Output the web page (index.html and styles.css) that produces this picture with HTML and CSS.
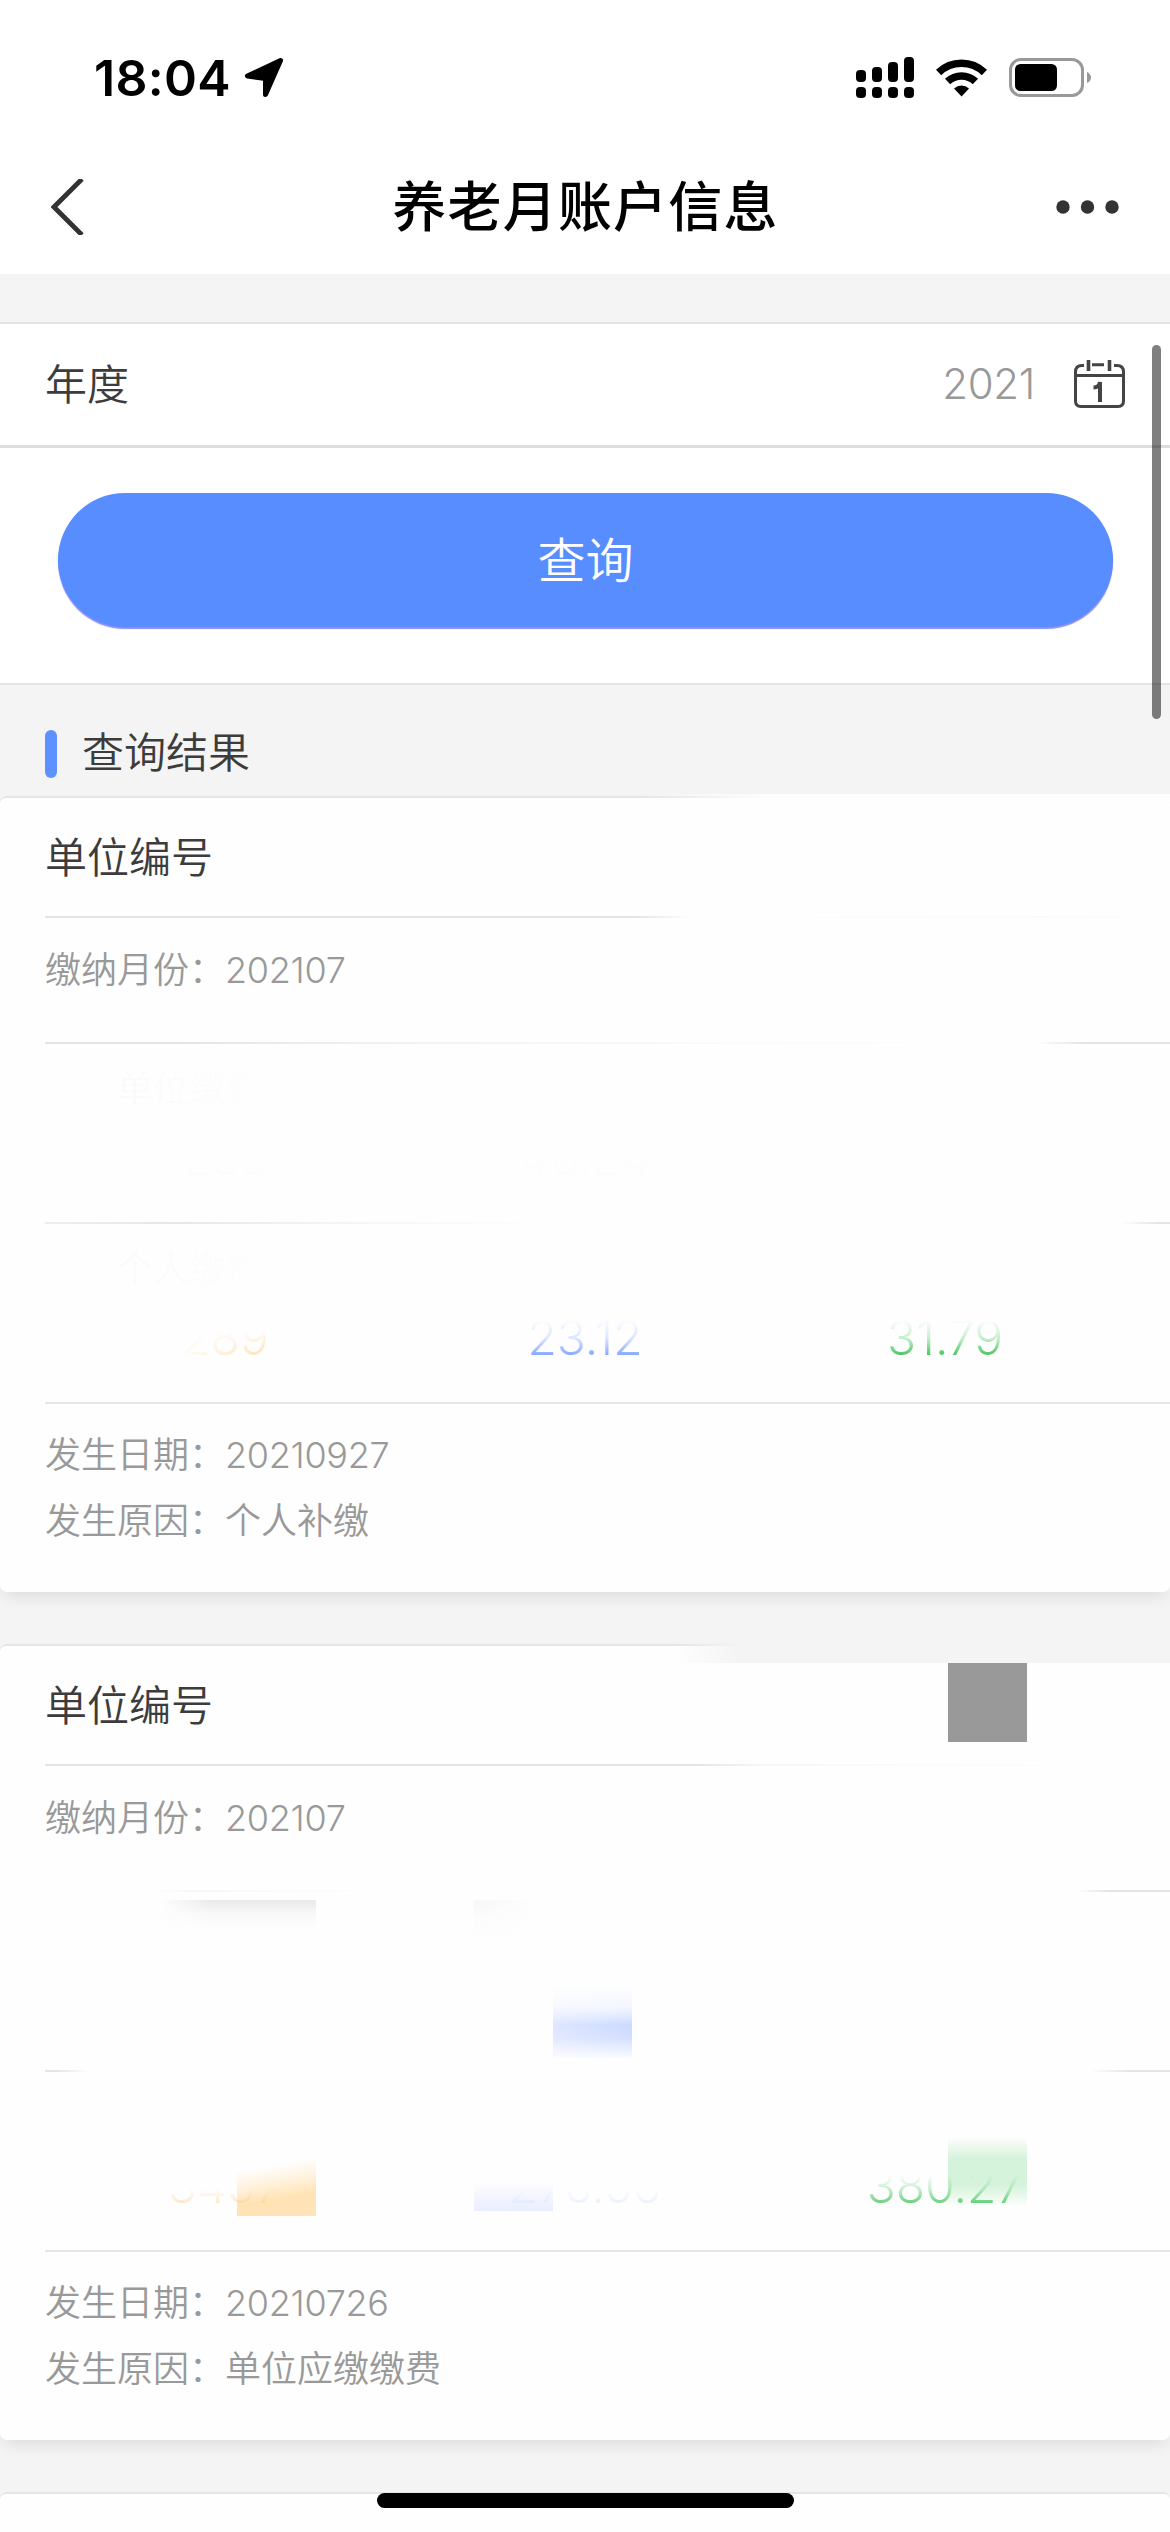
FILE: index.html
```html
<!DOCTYPE html>
<html lang="zh-CN">
<head>
<meta charset="utf-8">
<title>养老月账户信息</title>
<link rel="stylesheet" href="styles.css">
</head>
<body>
<div class="screen">
  <header class="top">
    <div class="status">
      <div class="status-left">
        <span class="time">18:04</span>
        <svg class="loc" width="40" height="40" viewBox="0 0 40 40"><path d="M36 3 L3 18.500 L21 21 L21 37 Z" fill="#000" stroke="#000" stroke-width="5" stroke-linejoin="round" transform="translate(.5 -.5)"/></svg>
      </div>
      <div class="status-right">
        <svg width="58" height="42" viewBox="0 0 58 42"><g fill="#000"><rect x="0" y="13" width="10" height="12" rx="4"/><rect x="16" y="10" width="10" height="15" rx="4"/><rect x="32" y="5" width="10" height="20" rx="4"/><rect x="48" y="0" width="10" height="25" rx="4"/><rect x="0" y="30" width="10" height="11" rx="4"/><rect x="16" y="30" width="10" height="11" rx="4"/><rect x="32" y="30" width="10" height="11" rx="4"/><rect x="48" y="30" width="10" height="11" rx="4"/></g></svg>
        <svg class="wifi" width="51" height="38" viewBox="0 0 51 38"><g fill="none" stroke="#000" stroke-width="7.500"><path d="M2.600 13.500 A33 33 0 0 1 48.400 13.500"/><path d="M11.600 22.500 A20 20 0 0 1 39.400 22.500"/></g><path d="M18 29.500 A11 11 0 0 1 33 29.500 L25.500 37.500 Z"/></svg>
        <svg class="battery" width="82" height="40" viewBox="0 0 82 40"><rect x="1.500" y="1.500" width="72" height="36" rx="10.500" fill="none" stroke="#999" stroke-width="3"/><rect x="6" y="6" width="42" height="27" rx="5.500"/><path d="M78 14 Q82 16 82 19.500 Q82 23 78 25 Z" fill="#999"/></svg>
      </div>
    </div>
    <div class="nav">
      <svg class="back" width="34" height="56" viewBox="0 0 34 56"><path d="M31 0 L3 28 L31 56" fill="none" stroke="#333" stroke-width="4.800"/></svg>
      <h1 class="title">养老月账户信息</h1>
      <svg class="more" width="63" height="14" viewBox="0 0 63 14"><g fill="#333"><circle cx="7" cy="7" r="6.700"/><circle cx="31.500" cy="7" r="6.700"/><circle cx="56" cy="7" r="6.700"/></g></svg>
    </div>
  </header>

  <section class="query">
    <div class="field">
      <span class="label">年度</span>
      <span class="year">2021</span>
      <svg class="calendar" width="52" height="50" viewBox="0 0 52 50"><g fill="none" stroke="#444" stroke-width="3"><path d="M10 5.500 H8 Q1.500 5.500 1.500 12 V41 Q1.500 46.500 7 46.500 H44 Q49.500 46.500 49.500 41 V12 Q49.500 5.500 43 5.500 H40 M18 4.800 H30 M1.500 15.500 H49.500"/><path d="M14.500 0 V11 M35.500 0 V11" stroke-width="3.600"/><path d="M19.500 27.500 Q25 27.500 26 22 V42" stroke-width="4"/></g></svg>
    </div>
    <div class="submit"><div class="button">查询</div></div>
  </section>

  <h2 class="section"><i class="mark"></i><span class="section-name">查询结果</span></h2>

  <main class="cards">
    <article class="card first">
      <div class="head">单位编号</div>
      <div class="rule r1"></div>
      <div class="month">缴纳月份：<span class="num">202107</span></div>
      <div class="rule r2"></div>
      <div class="figures row-a">
        <div class="cell"><span class="cap ghost">单位缴费基数</span><span class="val v-ghost">289</span></div>
        <div class="cell"><span class="cap"></span><span class="val v-ghost">46.24</span></div>
        <div class="cell"></div>
      </div>
      <div class="rule r3"></div>
      <div class="figures">
        <div class="cell"><span class="cap ghost">个人缴费基数</span><span class="val v-orange">289</span></div>
        <div class="cell"><span class="cap"></span><span class="val v-blue">23.12</span></div>
        <div class="cell"><span class="cap"></span><span class="val v-green">31.79</span></div>
      </div>
      <div class="rule"></div>
      <div class="foot">
        <p>发生日期：<span class="num">20210927</span></p>
        <p>发生原因：个人补缴</p>
      </div>
      <div class="patch p-edge1"></div>
    </article>

    <article class="card second">
      <div class="head">单位编号</div>
      <div class="rule r1"></div>
      <div class="month">缴纳月份：<span class="num">202107</span></div>
      <div class="rule r2"></div>
      <div class="figures"></div>
      <div class="rule r3"></div>
      <div class="figures front">
        <div class="cell"><span class="cap"></span><span class="val v-orange2">3457</span></div>
        <div class="cell"><span class="cap"></span><span class="val v-blue2">276.56</span></div>
        <div class="cell"><span class="cap"></span><span class="val v-green2">380.27</span></div>
      </div>
      <div class="rule"></div>
      <div class="foot">
        <p>发生日期：<span class="num">20210726</span></p>
        <p>发生原因：单位应缴缴费</p>
      </div>
      <div class="patch p-edge2"></div>
      <div class="patch p-square"></div>
      <div class="patch p-gray1"></div>
      <div class="patch p-gray2"></div>
      <div class="patch p-blue"></div>
      <div class="patch p-orange"></div>
      <div class="patch p-lilac"></div>
      <div class="patch p-green"></div>
    </article>

    <article class="card third">
      <div class="head">单位编号</div>
    </article>
  </main>

  <div class="scrollbar"></div>
  <div class="home"></div>
</div>
</body>
</html>
```
FILE: styles.css
```css
* { box-sizing: border-box; }
body { margin: 0; background: #f4f4f4; }
h1, h2, p { margin: 0; font-weight: inherit; font-size: inherit; }
svg { display: block; flex: none; }

.screen {
  position: relative;
  width: 1170px;
  height: 2532px;
  overflow: hidden;
  background: #f4f4f4;
  color: #3c3c3c;
  font: 350 42px/60px "Noto Sans CJK SC", sans-serif;
}

.top { height: 274px; background: #fff; }
.status { display: flex; justify-content: space-between; height: 140px; padding: 57px 79px 0 94px; }
.status-left, .status-right { display: flex; align-items: flex-start; }
.time { font: 600 50px/42px Inter, sans-serif; color: #000; width: 150px; letter-spacing: .3px; }
.loc { margin-top: 1px; }
.wifi { margin: 2px 22px 0 22px; }
.battery { margin-top: 1px; }
.nav { display: flex; align-items: center; justify-content: space-between; height: 134px; padding: 0 51px; }
.title { font-size: 54px; line-height: 80px; font-weight: 500; letter-spacing: 1.2px; color: #000; margin: 0 0 6px 30px; }

.query { margin-top: 48px; border-top: 2px solid #e4e4e4; border-bottom: 2px solid #e4e4e4; background: #fff; height: 363px; }
.field { display: flex; align-items: center; height: 124px; padding: 0 44px 0 45px; border-bottom: 3px solid #dcdddc; }
.label { flex: 1; padding-bottom: 6px; }
.year { font: 350 42px/60px Inter, sans-serif; color: #999; margin-right: 39px; padding-bottom: 2px; letter-spacing: -.3px; }
.submit { padding: 45px 57px 0 58px; }
.button { height: 134px; border-radius: 67px; background: #588dff; box-shadow: 0 2px 1px #8a8cff; color: #fff; font-size: 48px; line-height: 128px; text-align: center; }

.section { display: flex; align-items: center; gap: 25px; height: 111px; padding: 26px 45px 0; }
.section-name { padding-bottom: 7px; }
.mark { width: 12px; height: 48px; border-radius: 6px; background: #5c91ff; }

.cards { display: flex; flex-direction: column; gap: 52px; }
.card { position: relative; height: 796px; border-top: 2px solid #e5e5e5; border-radius: 7px; background: #fefefe; box-shadow: 0 8px 16px -4px rgba(0, 0, 0, .1); }
.head { height: 118px; padding-left: 45px; line-height: 113px; }
.month { height: 124px; padding-left: 45px; font-size: 36px; line-height: 99px; color: #999; }
.num { font-family: Inter, sans-serif; line-height: 1; letter-spacing: -.3px; }
.rule { height: 2px; margin-left: 45px; background: #e6e6e6; }
.first .r1 { background: linear-gradient(90deg, #e4e4e4 590px, #fefefe 645px, #fafafa 1000px, #fefefe 1125px); }
.first .r2 { background: linear-gradient(90deg, #e4e4e4 130px, #f2f2f2 350px, #fafafa 650px, #fefefe 960px, #fefefe 990px, #e4e4e4 1040px); }
.first .r3 { background: linear-gradient(90deg, #eee, #e6e6e6 130px, #f4f4f4 280px, #fefefe 500px, #fefefe 1075px, #e4e4e4 1115px); }
.second .r1 { background: linear-gradient(90deg, #e4e4e4 650px, #f8f8f8 720px, #fefefe 1080px); }
.second .r2 { background: linear-gradient(90deg, #fefefe 100px, #f8f8f8 150px, #fefefe 350px, #fefefe 1030px, #e4e4e4 1065px); }
.second .r3 { background: linear-gradient(90deg, #e4e4e4 10px, #fefefe 45px, #fefefe 1045px, #e4e4e4 1085px); }
.figures { display: grid; grid-template-columns: repeat(3, 360px); height: 178px; padding: 12px 45px 0; }
.cell { display: flex; flex-direction: column; align-items: center; }
.cap { height: 72px; font-size: 36px; line-height: 60px; }
.val { height: 60px; font: 350 48px/60px Inter, sans-serif; color: transparent; background-clip: text; -webkit-background-clip: text; }
.ghost { color: transparent; background: linear-gradient(90deg, #fafafa, #fdfdfd 60%, #fefefe 75%); background-clip: text; -webkit-background-clip: text; }
.v-ghost { background-image: linear-gradient(#fefefe 45%, #fcfcfc 80%); }
.v-orange { background-image: linear-gradient(90deg, #fefefe, rgba(254, 254, 254, 0)), linear-gradient(#fefefe 38%, #ffdfae 80%); }
.v-blue { background-image: linear-gradient(#fefefe 20%, #dce6ff 50%, #83a6ff 80%); }
.v-green { background-image: linear-gradient(#fefefe 20%, #c7efce 50%, #44c45c 80%); }
.v-orange2 { background-image: linear-gradient(rgba(250, 214, 150, 0) 55%, rgba(250, 205, 140, .5) 82%); }
.v-blue2 { background-image: linear-gradient(rgba(225, 232, 255, 0) 55%, rgba(215, 225, 255, .5) 82%); }
.v-green2 { background-image: linear-gradient(rgba(105, 210, 125, 0) 32%, rgba(105, 210, 125, .35) 55%, #5fce75 80%); }
.front { position: relative; z-index: 1; }
.foot { height: 188px; padding: 15px 45px 0; font-size: 36px; line-height: 66px; color: #999; }

.patch { position: absolute; }
.p-edge1 { left: 640px; right: 0; top: -4px; height: 8px; background: linear-gradient(90deg, rgba(254, 254, 254, 0), #fefefe 130px); }
.p-edge2 { left: 670px; right: 0; top: -2px; height: 19px; background: linear-gradient(90deg, rgba(244, 244, 244, 0) 5px, #f4f4f4 70px); }
.p-square { left: 948px; top: 17px; width: 79px; height: 79px; background: #999; }
.p-gray1 { left: 158px; top: 254px; width: 158px; height: 30px; background: linear-gradient(90deg, #fefefe, rgba(254, 254, 254, 0) 35%), linear-gradient(#e9e9e9, #f8f8f8 45%, #fefefe); }
.p-gray2 { left: 474px; top: 254px; width: 68px; height: 44px; background: linear-gradient(90deg, rgba(254, 254, 254, 0), #fefefe 90%), linear-gradient(#f7f7f7, #fcfcfc 40%, #fefefe); }
.p-blue { left: 553px; top: 340px; width: 79px; height: 72px; background: linear-gradient(90deg, rgba(254, 254, 254, .35), rgba(254, 254, 254, 0)), linear-gradient(#fefefe, #f3f6ff 30%, #cbdaff 55%, #d3dfff 72%, #fafbff); }
.p-orange { left: 237px; top: 500px; width: 79px; height: 70px; background: linear-gradient(170deg, #fefefe 30%, #fff3df 50%, #ffe3b5 72%, #ffe4ba); }
.p-lilac { left: 474px; top: 536px; width: 79px; height: 29px; background: linear-gradient(#fefefe, #e9eeff); }
.p-green { left: 948px; top: 491px; width: 79px; height: 68px; background: linear-gradient(#fefefe, #d5f2da 33%, #d5f2da 70%, #fafefa); }

.scrollbar { position: absolute; left: 1152px; top: 345px; width: 9px; height: 374px; border-radius: 5px; background: rgba(0, 0, 0, .5); }
.home { position: absolute; left: 377px; top: 2493px; width: 417px; height: 15px; border-radius: 8px; background: #000; }
```
